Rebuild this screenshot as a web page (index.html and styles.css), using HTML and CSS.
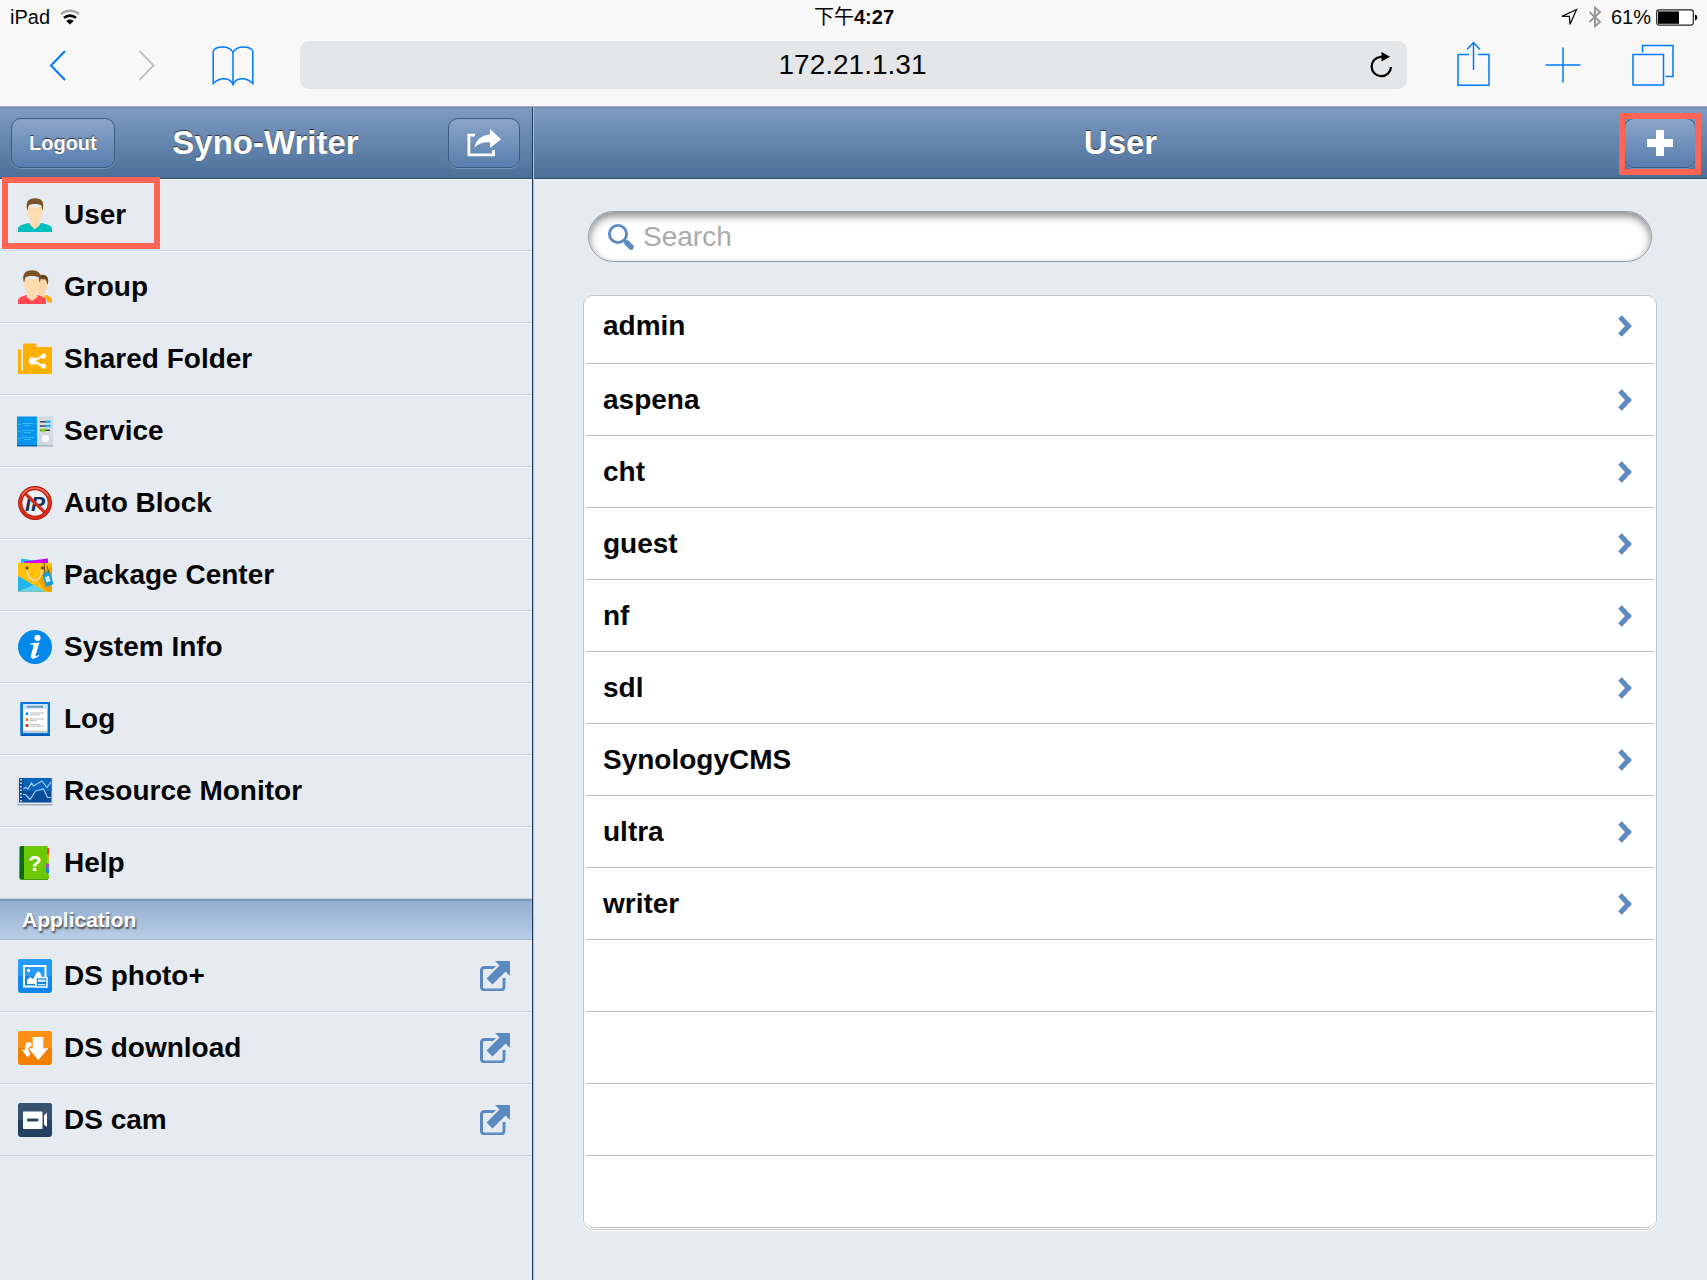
FILE: index.html
```html
<!DOCTYPE html>
<html lang="en">
<head>
<meta charset="utf-8">
<meta name="viewport" content="width=device-width, initial-scale=1">
<title>Syno-Writer</title>
<link rel="stylesheet" href="styles.css">
</head>
<body>
<header class="browser">
  <div class="status">
    <div class="status-side">
      <span>iPad</span>
      <svg class="wifi" width="20" height="16" viewBox="0 0 20 16" fill="none" aria-hidden="true"><path d="M1 5.2a13.5 13.5 0 0 1 18 0" stroke="#a9a9a9" stroke-width="2.4"/><path d="M4 8.9a9 9 0 0 1 12 0" stroke="#000" stroke-width="2.6"/><path d="M10 15.5L6.3 12a5.5 5.5 0 0 1 7.4 0z" fill="#000"/></svg>
    </div>
    <div class="clock">下午<span class="digits">4:27</span></div>
    <div class="status-side status-right">
      <svg width="18" height="18" viewBox="0 0 18 18" fill="none" stroke="#111" stroke-width="1.3" stroke-linejoin="miter" aria-hidden="true"><path d="M16.500 1.500L1.800 8.400h7.600l.6 8z"/></svg>
      <svg class="bluetooth" width="14" height="22" viewBox="0 0 14 22" fill="none" stroke="#979797" stroke-width="1.9" aria-hidden="true"><path d="M1.500 6l10.500 10L7 20.300V1.700L12 6 1.500 16"/></svg>
      <span>61%</span>
      <svg class="battery" width="42" height="17" viewBox="0 0 42 17" aria-hidden="true"><rect x=".7" y=".9" width="36.6" height="15.2" rx="2.5" fill="#fff" stroke="#222" stroke-width="1.2"/><path d="M2 2.400h21v12.400H2z"/><path d="M39 5.500c3 .6 3 5.400 0 6z"/></svg>
    </div>
  </div>
  <nav class="toolbar" aria-label="Browser">
    <div class="tools tools-left">
      <button type="button" aria-label="Back"><svg width="20" height="32" viewBox="0 0 20 32" fill="none" stroke="#007aff" stroke-width="2"><path d="M18 2L4 16.500l14 14.500"/></svg></button>
      <button type="button" aria-label="Forward"><svg width="20" height="32" viewBox="0 0 20 32" fill="none" stroke="#c3c3c3" stroke-width="2"><path d="M4.500 2l14 14.500L4.500 31"/></svg></button>
      <button type="button" aria-label="Bookmarks"><svg width="42" height="42" viewBox="0 0 42 42" fill="none" stroke="#007aff" stroke-width="1.500"><path d="M21 8.500C19 4.500 15.500 3 10.500 3S2.500 4.500 1.200 7v32.500c6.500-6.500 17-6.500 19.800 1.200 2.800-7.700 13.300-7.700 19.800-1.200V7C39.500 4.500 36 3 31.500 3S23 4.500 21 8.500zV41"/></svg></button>
    </div>
    <div class="address">
      <input type="text" aria-label="Address" value="172.21.1.31">
      <button type="button" aria-label="Reload"><svg width="24" height="28" viewBox="0 0 24 28" fill="none" aria-hidden="true"><path d="M14 5.800h-2a9.700 9.700 0 1 0 10 10.200" stroke="#000" stroke-width="2.300"/><path d="M12.500 1v9.500l8.500-4.700z" fill="#000"/></svg></button>
    </div>
    <div class="tools tools-right">
      <button type="button" aria-label="Share"><svg width="34" height="48" viewBox="0 0 34 48" fill="none" stroke="#007aff" stroke-width="1.500"><path d="M13 13.500H2v30.700h31V13.500H22M17.500 29V1.500M11 8.500l6.500-7 6.500 7"/></svg></button>
      <button type="button" aria-label="New tab"><svg width="36" height="36" viewBox="0 0 36 36" fill="none" stroke="#007aff" stroke-width="1.500"><path d="M18 .5v35M.5 18h35"/></svg></button>
      <button type="button" aria-label="Tabs"><svg width="42" height="42" viewBox="0 0 42 42" fill="none" stroke="#007aff" stroke-width="1.500"><path d="M1 10.500h30.500v30.500H1zM10.500 8.500V1.500h30.500V32.500H33.500"/></svg></button>
    </div>
  </nav>
</header>

<div class="app">
  <aside class="sidebar">
    <header class="bar">
      <button type="button" class="bar-button">Logout</button>
      <h1 class="bar-title">Syno-Writer</h1>
      <button type="button" class="bar-button bar-icon" aria-label="Share"><svg width="36" height="30" viewBox="0 0 36 30"><path d="M9 7.200H2.900v19.700h24.600v-5" fill="none" stroke="#fff" stroke-width="2.800"/><path d="M24 1l11 10.200L24 20v-5.600c-6-.4-11 .8-15.500 5C10 12 15 7 24 6.400z" fill="#fff"/></svg></button>
    </header>
    <nav aria-label="Settings">
      <ul class="menu">
        <li class="marked"><a href="#user"><svg class="icon" viewBox="0 0 34 34"><path d="M0 34v-3c0-3 3-4.500 11-6h12c8 1.500 11 3 11 6v3z" fill="#00bfbf"/><path d="M11 25l3-2h6l3 2-6 6z" fill="#ffdcaf"/><path d="M10 9h14.500l-.3 6c-.2 4-1.700 6-3.200 8l1 4-5 4-5-4 1-4c-1.500-2-3-4-3.200-8z" fill="#ffdcaf"/><path d="M9.600 13C7 4 10 .3 17 .3S27 4 24.400 13c-.8-3-.6-5-1.400-6-3-1.500-9-1.500-12 0-.8 1-.6 3-1.400 6z" fill="#7c5228"/></svg>User</a></li>
        <li><a href="#group"><svg class="icon" viewBox="0 0 34 34"><path d="M26 25h3c3 1 5 3 5 5v2.500h-8z" fill="#ffae12"/><path d="M21 9h8.500c.5 7-1 11-3 13l.5 4h-7z" fill="#fbd6a6"/><path d="M22 5c6-1 10 2 7.500 10-.7-3-1-4.500-2-5.500L22 9z" fill="#6b4421"/><path d="M-.5 34v-3c0-3 3-4.500 9-6h11c6 1.500 9.500 3 9.500 6v3z" fill="#f4f6fa"/><path d="M0 34v-3c0-3 2-4.500 9-6h10c7 1.500 9 3 9 6v3z" fill="#ff4850"/><path d="M6 9h16l-.3 6c-.2 4-1.700 6-3.200 8l1 4-5.500 4-5.500-4 1-4c-1.500-2-3-4-3.200-8z" fill="#ffdcaf"/><path d="M6 13C3.500 4 7 .3 14 .3S24.500 4 21.700 13c-.8-3-.6-5-1.400-6-3-1.500-9.500-1.500-12.500 0-.8 1-1 3-1.800 6z" fill="#7c5228"/></svg>Group</a></li>
        <li><a href="#shared-folder"><svg class="icon" viewBox="0 0 34 34"><path d="M0 7.500h3v21h2V2.800C5 2 5.500 1.500 6.500 1.500H17c1 0 1.500.5 1.500 1.500v2H33c.7 0 1 .5 1 1v24.500c0 1-.5 1.500-1.500 1.500h-31C.5 32 0 31.500 0 30.500z" fill="#ffb101"/><path d="M25 14L14.500 19 25 24" fill="none" stroke="#fff" stroke-width="2"/><g fill="#fff"><circle cx="14.500" cy="19" r="3.800"/><circle cx="25.500" cy="14" r="2.600"/><circle cx="25.500" cy="24" r="2.600"/></g></svg>Shared Folder</a></li>
        <li><a href="#service"><svg class="icon icon-wide" viewBox="0 0 38 34"><path d="M21 3.500h16v29H21z" fill="#a6b2bf"/><path d="M21 2.500h16v28.500H21z" fill="#d2dae2"/><path d="M1 31h20v1.500H1z" fill="#0064aa"/><path d="M1 2.500h20V31H1z" fill="#0895eb"/><path d="M2.500 10.500h2M6.500 9.500h12M8 11.500h7M2.500 17.500h2M6.500 16.500h12M8 18.500h7M2.500 24.500h2M6.500 23.500h12M8 25.500h7" stroke="#37b9ff"/><path d="M24 7.800h10M24 12h10M24 16.200h10" stroke="#444" stroke-width="1.600"/><path d="M29 6.500h5.500V9H29zM30 10.700h4.500v2.600H30z" fill="#20b5f5"/><path d="M24.500 14.800h5v2.800h-5z" fill="#77d000"/><circle cx="29.500" cy="24.500" r="4.300" fill="#f7fafd" stroke="#b4c0cb" stroke-width=".6"/></svg>Service</a></li>
        <li><a href="#auto-block"><svg class="icon" viewBox="0 0 34 34"><circle cx="17" cy="17" r="14.500" fill="#eef1f6"/><text x="17" y="24.500" text-anchor="middle" class="glyph-ip">IP</text><path d="M6.500 7l21 20" stroke="#d42d17" stroke-width="3.200"/><circle cx="17" cy="17" r="14.800" fill="none" stroke="#a71609" stroke-width="4.200"/><circle cx="17" cy="17" r="14.800" fill="none" stroke="#d92d17" stroke-width="3"/><path d="M4 9.500A15 15 0 0 1 30 9.500" fill="none" stroke="#f0866f" stroke-width="1.200"/></svg>Auto Block</a></li>
        <li><a href="#package-center"><svg class="icon icon-wide" viewBox="0 0 38 34"><path d="M5.500.5L20 3v5H4z" fill="#16c1ea"/><path d="M8 3.500L32 .5V8H8z" fill="#cf00f5"/><path d="M2 5h34v28c0 .6-.4 1-1 1H3c-.6 0-1-.4-1-1z" fill="#ffc107"/><path d="M20 20L36 8v25.500H30z" fill="#e9a400"/><path d="M2 18l27 15.500H2z" fill="#21b4ed"/><path d="M2 33.500L18 27l11 6.500z" fill="#66d2f7"/><path d="M11 11c0 15 15 15 15 0" fill="none" stroke="#fbd28a" stroke-width="2"/><circle cx="11" cy="10" r="1.500" fill="#5b4200"/><circle cx="26.500" cy="10" r="1.500" fill="#5b4200"/><path d="M28 4l1 13 4-1-2-8" fill="none" stroke="#5b4a10"/><path d="M26.500 17l4-3.500 3.500 1 3.500 11.500-7.500 3z" fill="#159cdd"/><path d="M29 19l4-1.200 1.500 5.500-4 1.200z" fill="#c9effc"/></svg>Package Center</a></li>
        <li><a href="#system-info"><svg class="icon" viewBox="0 0 34 34"><circle cx="17" cy="17" r="17" fill="#0287ea"/><circle cx="19.500" cy="7.800" r="3.100" fill="#fff"/><path d="M12 13.500l9.500-1-4 13c-.3 1.200.5 1.500 3-.8l.8.900c-3.500 4-9.600 4.400-8.300-.6l2.600-9c.3-1.200-1-1.500-3.600-1.500z" fill="#fff"/></svg>System Info</a></li>
        <li><a href="#log"><svg class="icon" viewBox="0 0 34 34"><path d="M2.500.5h29.500V34H2.500z" fill="#0a55b0"/><path d="M2.500 0h29.500v32.500H2.500z" fill="#0878e0"/><path d="M5 2h24.500v27.500H5z" fill="#fff"/><path d="M5 2h24.500v5H5z" fill="#cfe6fa"/><path d="M5 28.500h24.500V31H5z" fill="#c2ccd8"/><path d="M9 4.700h16" stroke="#6c8fb5" stroke-width="1.800"/><path d="M12 11h14M12 12.800h10M12 17h14M12 18.800h7M12 22.500h10M12 24.200h14" stroke="#bdbdbd"/><circle cx="9" cy="11.800" r="1.500" fill="#008df5"/><circle cx="9" cy="17.600" r="1.500" fill="#f57c00"/><circle cx="9" cy="23.400" r="1.500" fill="#d51212"/></svg>Log</a></li>
        <li><a href="#resource-monitor"><svg class="icon icon-wide" viewBox="0 0 38 34"><path d="M1.500 4h35v27.500h-35z" fill="#a5adb7"/><path d="M1.500 3h35v27h-35z" fill="#e4e8ed"/><path d="M3 4h32.500v24.500H3z" fill="#094c9a"/><path d="M7.500 4h28v13h-28z" fill="#0a63bc"/><path d="M5 5v23" stroke="#b9cbe0" stroke-width="2" stroke-dasharray="1.500 2"/><path d="M7 15l3-1.500 2 1.500 3.500-6 2 3L26 7l5 6.500L35 8M7 20.500h2.500l4.500 5L19.500 17l8-2 4 8.500H35" fill="none" stroke="#9fcbf2" stroke-width="1.200"/></svg>Resource Monitor</a></li>
        <li><a href="#help"><svg class="icon" viewBox="0 0 34 34"><path d="M2 2h28v32H3c-1 0-1.500-1-1.500-2z" fill="#4a9c08"/><path d="M27 2h4v6h-4z" fill="#f13b2e"/><path d="M27 8h4v4.500h-4z" fill="#f5a012"/><path d="M27 12.500h4v5h-4z" fill="#a8d622"/><path d="M27 17.500h4v5h-4z" fill="#9b51c5"/><path d="M27 22.500h4v5h-4z" fill="#1788dc"/><path d="M5 0h25l-1 3v14l-1 2v7l3 3v2.500c0 1-.5 1.500-1.500 1.500H5z" fill="#6fc804"/><path d="M3 0h3v33H3.500C2 33 1.500 32 1.500 31V2C1.500.8 2 0 3 0z" fill="#0d6a16"/><text x="17" y="25" text-anchor="middle" class="glyph-help">?</text></svg>Help</a></li>
      </ul>
      <h2 class="section">Application</h2>
      <ul class="menu">
        <li><a href="#ds-photo"><svg class="icon" viewBox="0 0 34 34"><rect width="34" height="34" rx="3" fill="#1287e8"/><path d="M0 17V3c0-2 1-3 3-3h28c2 0 3 1 3 3v14z" fill="#259bfb"/><path d="M27.500 18V7H6v20.500h12" fill="none" stroke="#fff" stroke-width="2"/><circle cx="10.500" cy="11.500" r="1.600" fill="#fff"/><path d="M9 25v-4l3-3 3 2 4-7c2-1.500 3 0 5 5h3v7z" fill="#fff"/><path d="M18 18.500h11V28H18z" fill="#1287e8" stroke="#fff" stroke-width="1.500"/><path d="M20 20.500h7.500v2.500H20zM20 25h7.500v1.300H20z" fill="#d5ecff"/></svg><span>DS photo+</span><svg class="launch" viewBox="0 0 30 30"><path d="M16 6.500H4.500a3 3 0 0 0-3 3V26a3 3 0 0 0 3 3H21a3 3 0 0 0 3-3v-9" fill="none" stroke="#5b8ac1" stroke-width="3"/><path d="M15 0h15v15l-4.500-4.500L12.500 23.500l-6-6L19.500 4.500z" fill="#5b8ac1" stroke="#e6ebf2" stroke-width="4" paint-order="stroke"/></svg></a></li>
        <li><a href="#ds-download"><svg class="icon" viewBox="0 0 34 34"><rect width="34" height="34" rx="3" fill="#f27f04"/><path d="M0 17V3c0-2 1-3 3-3h28c2 0 3 1 3 3v14z" fill="#fb9215"/><path d="M14.700 6h10.600v11.200H30.500L20.300 29 10.500 17.200h4.200z" fill="#fff"/><path d="M8 11.500h5.500V15l-2.500 1-1 2.500 2.500 4.500-3 3.500-5.500-7.500 3-.5z" fill="#fff"/></svg><span>DS download</span><svg class="launch" viewBox="0 0 30 30"><path d="M16 6.500H4.500a3 3 0 0 0-3 3V26a3 3 0 0 0 3 3H21a3 3 0 0 0 3-3v-9" fill="none" stroke="#5b8ac1" stroke-width="3"/><path d="M15 0h15v15l-4.500-4.500L12.500 23.500l-6-6L19.500 4.500z" fill="#5b8ac1" stroke="#e6ebf2" stroke-width="4" paint-order="stroke"/></svg></a></li>
        <li><a href="#ds-cam"><svg class="icon" viewBox="0 0 34 34"><rect width="34" height="34" rx="3" fill="#24425f"/><path d="M0 17V3c0-2 1-3 3-3h28c2 0 3 1 3 3v14z" fill="#365370"/><rect x="5" y="8.500" width="19.500" height="17.500" rx="1" fill="#fff"/><rect x="9" y="15.500" width="11.500" height="3" rx="1" fill="#2b4864"/><path d="M29 9.500v14.500l-3-2.500v-9z" fill="#fff"/></svg><span>DS cam</span><svg class="launch" viewBox="0 0 30 30"><path d="M16 6.500H4.500a3 3 0 0 0-3 3V26a3 3 0 0 0 3 3H21a3 3 0 0 0 3-3v-9" fill="none" stroke="#5b8ac1" stroke-width="3"/><path d="M15 0h15v15l-4.500-4.500L12.500 23.500l-6-6L19.500 4.500z" fill="#5b8ac1" stroke="#e6ebf2" stroke-width="4" paint-order="stroke"/></svg></a></li>
      </ul>
    </nav>
  </aside>

  <main class="content">
    <header class="bar">
      <h2 class="bar-title">User</h2>
      <button type="button" class="bar-button bar-icon marked" aria-label="Add user"><svg width="26" height="26" viewBox="0 0 26 26"><path d="M9 0h8v9h9v8h-9v9H9v-9H0V9h9z" fill="#fff"/></svg></button>
    </header>
    <div class="pane">
      <label class="search">
        <svg width="28" height="28" viewBox="0 0 28 28" fill="none" stroke="#5b8ac1" aria-hidden="true"><circle cx="11" cy="11" r="8.600" stroke-width="2.900"/><path d="M17 17l2.500 2.500" stroke-width="3"/><path d="M20 20l4 4" stroke-width="5.500" stroke-linecap="round"/></svg>
        <input type="search" placeholder="Search" aria-label="Search">
      </label>
      <ul class="users">
        <li><a href="#admin">admin<svg class="chevron" viewBox="0 0 16 24"><path d="M3 3l8.500 9L3 21"/></svg></a></li>
        <li><a href="#aspena">aspena<svg class="chevron" viewBox="0 0 16 24"><path d="M3 3l8.500 9L3 21"/></svg></a></li>
        <li><a href="#cht">cht<svg class="chevron" viewBox="0 0 16 24"><path d="M3 3l8.500 9L3 21"/></svg></a></li>
        <li><a href="#guest">guest<svg class="chevron" viewBox="0 0 16 24"><path d="M3 3l8.500 9L3 21"/></svg></a></li>
        <li><a href="#nf">nf<svg class="chevron" viewBox="0 0 16 24"><path d="M3 3l8.500 9L3 21"/></svg></a></li>
        <li><a href="#sdl">sdl<svg class="chevron" viewBox="0 0 16 24"><path d="M3 3l8.500 9L3 21"/></svg></a></li>
        <li><a href="#synologycms">SynologyCMS<svg class="chevron" viewBox="0 0 16 24"><path d="M3 3l8.500 9L3 21"/></svg></a></li>
        <li><a href="#ultra">ultra<svg class="chevron" viewBox="0 0 16 24"><path d="M3 3l8.500 9L3 21"/></svg></a></li>
        <li><a href="#writer">writer<svg class="chevron" viewBox="0 0 16 24"><path d="M3 3l8.500 9L3 21"/></svg></a></li>
        <li></li>
        <li></li>
        <li></li>
        <li></li>
      </ul>
    </div>
  </main>
</div>
</body>
</html>
```
FILE: styles.css
```css
*,
*::before,
*::after {
  box-sizing: border-box;
}

body {
  margin: 0;
  min-height: 100vh;
  display: flex;
  flex-direction: column;
  background: #e6ebf2;
  color: #060606;
  font-family: "Liberation Sans", "Noto Sans CJK TC", sans-serif;
  font-size: 28px;
  line-height: 32px;
}

ul,
h1,
h2 {
  margin: 0;
  padding: 0;
  list-style: none;
}

a {
  color: inherit;
  text-decoration: none;
}

button,
input {
  margin: 0;
  padding: 0;
  border: 0;
  background: none;
  color: inherit;
  font: inherit;
}

svg {
  display: block;
  flex: none;
}

/* Browser chrome */

.browser {
  background: #f8f8f8;
  border-bottom: 1px solid #a3b0c2;
  height: 107px;
}

.status {
  display: grid;
  grid-template-columns: 1fr auto 1fr;
  align-items: center;
  height: 34px;
  padding: 0 9px 0 10px;
  font-size: 20px;
  line-height: 24px;
}

.status-side {
  display: flex;
  align-items: center;
  gap: 10px;
}

.status-right {
  justify-content: flex-end;
}

.bluetooth {
  margin-right: -1px;
}

.battery {
  margin-left: -5px;
}

.digits {
  font-weight: bold;
}

.toolbar {
  display: flex;
  align-items: center;
  padding: 7px 9px 0 13px;
}

.tools {
  display: flex;
}

.tools button {
  display: flex;
  align-items: center;
  justify-content: center;
  height: 48px;
}

.tools-left button {
  width: 88px;
}

.tools-right button {
  width: 90px;
}

.address {
  flex: 1;
  display: flex;
  align-items: center;
  height: 48px;
  margin: 0 21px 0 23px;
  padding: 0 14px 0 36px;
  border-radius: 9px;
  background: #e5e6e8;
}

.address input {
  flex: 1;
  min-width: 0;
  text-align: center;
}

/* App frame */

.app {
  flex: 1;
  display: flex;
}

.sidebar {
  flex: 0 0 533px;
  border-right: 1px solid #1f3b60;
}

.content {
  flex: 1;
  min-width: 0;
  border-left: 1px solid #b4c0d0;
}

.bar {
  display: grid;
  grid-template-columns: 1fr auto 1fr;
  align-items: center;
  height: 72px;
  padding: 0 12px 0 11px;
  border-bottom: 1px solid #304d70;
  background: linear-gradient(#7e9bc3, #4b6f99);
  box-shadow: inset 0 1px #7089aa;
  color: #fff;
}

.content .bar {
  padding-right: 11px;
}

.bar-title {
  grid-column: 2;
  font-size: 33px;
  line-height: 40px;
  text-shadow: 0 -1px 1px #333;
}

.bar-button {
  justify-self: start;
  position: relative;
  display: flex;
  align-items: center;
  justify-content: center;
  height: 50px;
  padding: 0 17px;
  border: 1px solid #3c5b80;
  border-radius: 10px;
  background: linear-gradient(#8ba6c8, #577eae);
  box-shadow: 0 1px 1px #7896bb;
  font-size: 20px;
  font-weight: bold;
  line-height: 24px;
  text-shadow: 0 -1px 1px #333;
}

.bar-icon {
  justify-self: end;
  width: 72px;
  padding: 0;
}

/* Red frames that point out a control */

.marked {
  position: relative;
}

.marked::after {
  content: "";
  position: absolute;
  border: 6px solid #ff6554;
  pointer-events: none;
}

.menu .marked::after {
  inset: -2px auto 1px 2px;
  width: 158px;
}

.bar-button.marked::after {
  inset: -6px -6px -8px;
}

/* Sidebar menu */

.menu li {
  height: 72px;
  border-bottom: 1px solid #c8d2df;
  box-shadow: inset 0 1px #f3f6fa;
}

.menu a {
  display: flex;
  align-items: center;
  gap: 12px;
  height: 100%;
  padding: 0 22px 0 18px;
  font-weight: bold;
}

.icon {
  width: 34px;
  height: 34px;
}

.icon-wide {
  width: 38px;
  margin: 0 -2px;
}

.launch {
  width: 30px;
  height: 30px;
  margin-left: auto;
}

.glyph-ip {
  font: italic bold 21px "Liberation Sans", sans-serif;
  fill: #1c2f5c;
}

.glyph-help {
  font: bold 22px "Liberation Sans", sans-serif;
  fill: #fff;
}

.section {
  height: 41px;
  padding: 6px 22px;
  border-top: 2px solid #7a98bd;
  border-bottom: 1px solid #9db3cf;
  background: linear-gradient(#92aed0, #bacee8);
  color: #fff;
  font-size: 21px;
  line-height: 26px;
  text-shadow: 1px 2px 2px #444;
}

/* User list */

.pane {
  padding: 32px 50px 48px 49px;
}

.search {
  display: flex;
  align-items: center;
  gap: 8px;
  height: 51px;
  margin: 0 5px 33px;
  padding: 0 24px 0 18px;
  border: 1px solid #909aa6;
  border-radius: 26px;
  background: #fff;
  box-shadow: inset 0 4px 8px #888;
}

.search input {
  flex: 1;
  min-width: 0;
  outline: 0;
  appearance: none;
}

.search input::placeholder {
  color: #aaa;
  opacity: 1;
}

.users {
  padding: 0 2px 1px;
  border: 1px solid #c4c6c9;
  border-radius: 10px;
  background: #fff;
  box-shadow: 0 1px 1px #fff;
}

.users li {
  height: 72px;
  border-bottom: 1px solid #c0c0c0;
}

.users li:first-child {
  height: 68px;
  padding-bottom: 7px;
}

.users li:last-child {
  border-radius: 0 0 8px 8px;
}

.users a {
  display: flex;
  align-items: center;
  justify-content: space-between;
  height: 100%;
  padding: 0 21px 0 17px;
  font-weight: bold;
}

.chevron {
  width: 16px;
  height: 24px;
  fill: none;
  stroke: #5b8ac1;
  stroke-width: 5;
}
```
